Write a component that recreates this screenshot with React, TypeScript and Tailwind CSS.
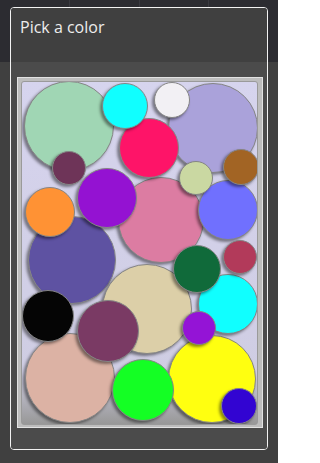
import React from 'react';

// each circle: position inside the 237x344 canvas, drawn bottom to top
const circles = [
  { name: 'mint', cls: 'left-[2px] top-[-1px] w-[90px] h-[90px] bg-[#a0d6b4]' },
  { name: 'lavender', cls: 'left-[146px] top-[1px] w-[90px] h-[90px] bg-[#aaa2da]' },
  { name: 'mauve', cls: 'left-[96px] top-[95px] w-[86px] h-[86px] bg-[#dc7ca2]' },
  { name: 'slate', cls: 'left-[6px] top-[134px] w-[88px] h-[88px] bg-[#5e52a2]' },
  { name: 'beige', cls: 'left-[80px] top-[182px] w-[90px] h-[90px] bg-[#dccfa8]' },
  { name: 'salmon', cls: 'left-[3px] top-[251px] w-[90px] h-[90px] bg-[#dcb2a4]' },
  { name: 'yellow', cls: 'left-[146px] top-[253px] w-[88px] h-[88px] bg-[#ffff10]' },
  { name: 'cyan2', cls: 'left-[176px] top-[192px] w-[60px] h-[60px] bg-[#10ffff]' },
  { name: 'periwinkle', cls: 'left-[176px] top-[98px] w-[60px] h-[60px] bg-[#7070fe]' },
  { name: 'pink', cls: 'left-[97px] top-[36px] w-[60px] h-[60px] bg-[#fe1468]' },
  { name: 'cyan1', cls: 'left-[80px] top-[1px] w-[46px] h-[46px] bg-[#10ffff]' },
  { name: 'white', cls: 'left-[132px] top-[0px] w-[36px] h-[36px] bg-[#f2f0f4]' },
  { name: 'plumSmall', cls: 'left-[30px] top-[69px] w-[34px] h-[34px] bg-[#6e3458]' },
  { name: 'olive', cls: 'left-[157px] top-[79px] w-[34px] h-[34px] bg-[#cad8a2]' },
  { name: 'brown', cls: 'left-[201px] top-[67px] w-[36px] h-[36px] bg-[#a26424]' },
  { name: 'violet', cls: 'left-[55px] top-[86px] w-[60px] h-[60px] bg-[#9412d2]' },
  { name: 'orange', cls: 'left-[3px] top-[105px] w-[50px] h-[50px] bg-[#ff9234]' },
  { name: 'darkGreen', cls: 'left-[151px] top-[163px] w-[48px] h-[48px] bg-[#106a3a]' },
  { name: 'crimson', cls: 'left-[201px] top-[158px] w-[34px] h-[34px] bg-[#b23a5a]' },
  { name: 'black', cls: 'left-[0px] top-[208px] w-[52px] h-[52px] bg-[#050505]' },
  { name: 'plum', cls: 'left-[55px] top-[218px] w-[62px] h-[62px] bg-[#7a3a64]' },
  { name: 'purpleSmall', cls: 'left-[160px] top-[229px] w-[34px] h-[34px] bg-[#9414d6]' },
  { name: 'green', cls: 'left-[90px] top-[277px] w-[62px] h-[62px] bg-[#14ff24]' },
  { name: 'indigo', cls: 'left-[199px] top-[306px] w-[36px] h-[36px] bg-[#3204d2]' },
];

export default function App() {
  return (
    <div className="relative h-[463px] w-[278px] overflow-hidden bg-[#404040] font-['Open_Sans',sans-serif]">
      {/* dimmed screen behind the dialog */}
      <div className="flex h-[62px] bg-[#2c2c31]">
        <div className="flex-1 border-r border-[#3a3a40]" />
        <div className="flex-1 border-r border-[#3a3a40]" />
        <div className="flex-1 border-r border-[#3a3a40]" />
        <div className="flex-1" />
      </div>

      {/* dialog */}
      <div className="absolute left-[10px] top-[7px] flex h-[443px] w-[258px] flex-col overflow-hidden rounded-[4px] border border-[#f2f2f2]">
        <div className="h-[54px] shrink-0 bg-[#404040] pl-[9px] pt-[8px] text-[16px] leading-[22px] text-[#ededed]">
          Pick a color
        </div>
        <div className="flex-1 bg-[#4b4b4b] pb-[21px] pl-[6px] pr-[4px] pt-[15px]">
          <div className="h-[351px] w-[246px] border border-[#e2e2e2] bg-[#bdbdbd] pb-[2px] pl-[3px] pr-[4px] pt-[3px]">
            <div className="relative h-[344px] w-[237px] overflow-hidden rounded-[3px] border-[0.5px] border-[#9a9a9a] bg-linear-to-b from-[#d6d4ee] via-[#cfcde3] via-85% to-[#989898]">
              {circles.map((c) => (
                <div
                  key={c.name}
                  className={`absolute rounded-full border-[1.5px] border-[#858585] shadow-[-2px_2px_3px_rgba(0,0,0,0.45)] ${c.cls}`}
                />
              ))}
            </div>
          </div>
        </div>
      </div>
    </div>
  );
}
